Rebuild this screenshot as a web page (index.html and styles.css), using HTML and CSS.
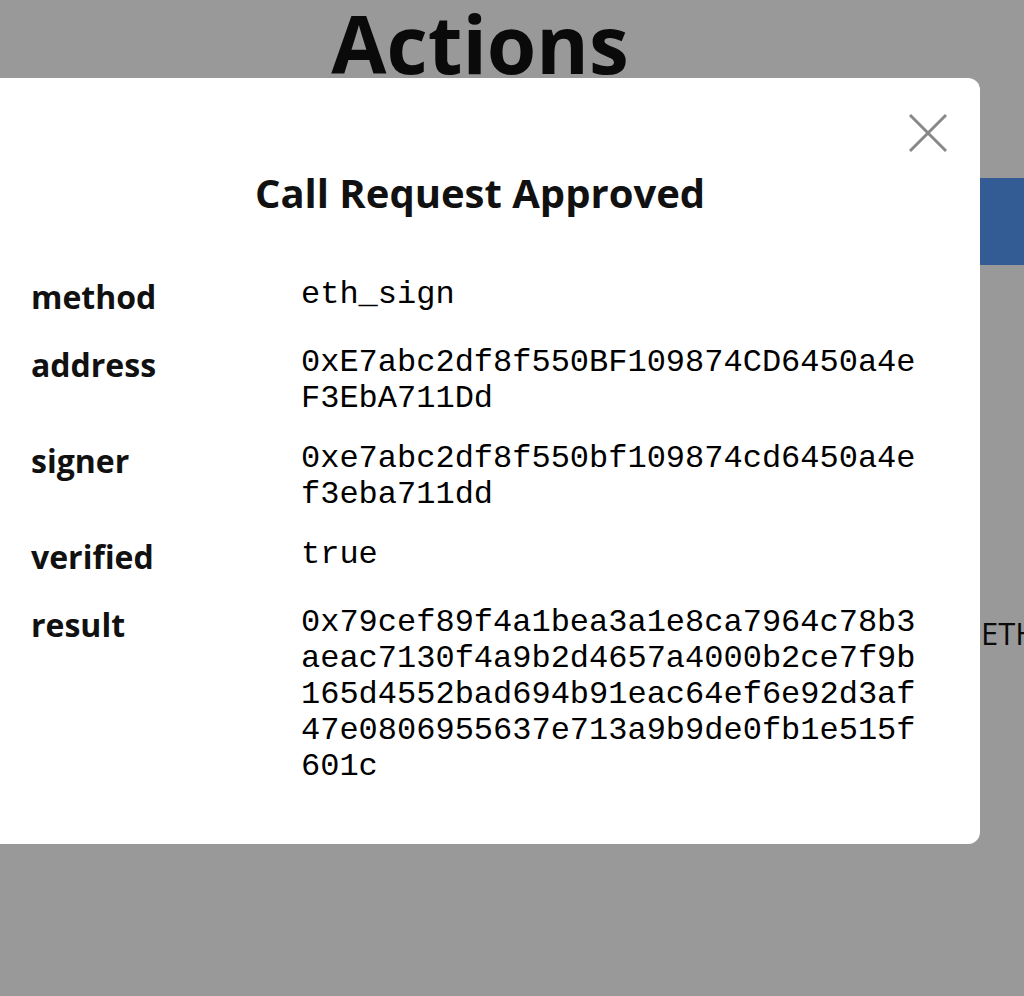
FILE: index.html
```html
<!DOCTYPE html>
<html lang="en">
<head>
<meta charset="utf-8">
<title>Call Request Approved</title>
<link rel="stylesheet" href="styles.css">
</head>
<body>
<main class="page">
  <h1 class="page-title">Actions</h1>
  <div class="action-bar"></div>
  <div class="balance">ETH</div>
</main>
<div class="overlay"></div>
<section class="modal">
  <button class="close" aria-label="Close">
    <svg width="40" height="40" viewBox="0 0 40 40"><path d="M2 2 L38 38 M38 2 L2 38" stroke="#888" stroke-width="3" fill="none"/></svg>
  </button>
  <h2 class="modal-title">Call Request Approved</h2>
  <div class="rows">
    <div class="row"><div class="label">method</div><div class="value">eth_sign</div></div>
    <div class="row"><div class="label">address</div><div class="value">0xE7abc2df8f550BF109874CD6450a4eF3EbA711Dd</div></div>
    <div class="row"><div class="label">signer</div><div class="value">0xe7abc2df8f550bf109874cd6450a4ef3eba711dd</div></div>
    <div class="row"><div class="label">verified</div><div class="value">true</div></div>
    <div class="row"><div class="label">result</div><div class="value">0x79cef89f4a1bea3a1e8ca7964c78b3aeac7130f4a9b2d4657a4000b2ce7f9b165d4552bad694b91eac64ef6e92d3af47e0806955637e713a9b9de0fb1e515f601c</div></div>
  </div>
</section>
</body>
</html>
```

FILE: styles.css
```css
html, body {
  margin: 0;
  padding: 0;
}
body {
  background: #fff;
  font-family: "Open Sans", "Liberation Sans", sans-serif;
  color: #111;
  overflow: hidden;
  width: 1024px;
  height: 996px;
}
.page {
  width: 960px;
}
.page-title {
  margin: 3px 0 0 0;
  font-size: 80px;
  line-height: 80px;
  font-weight: 700;
  text-align: center;
}
.action-bar {
  margin-top: 95px;
  height: 87px;
  margin-right: -64px;
  background: #5599f7;
}
.balance {
  margin-top: 347px;
  margin-left: 981px;
  font-size: 31px;
  white-space: nowrap;
}
.overlay {
  position: fixed;
  inset: 0;
  background: rgba(0, 0, 0, 0.4);
}
.modal {
  position: fixed;
  top: 78px;
  left: -20px;
  width: 1000px;
  box-sizing: border-box;
  padding: 90px 51px 41px 51px;
  background: #fff;
  border-radius: 12px;
}
.close {
  position: absolute;
  top: 35px;
  right: 32px;
  width: 40px;
  height: 40px;
  padding: 0;
  border: 0;
  background: none;
  display: flex;
}
.modal-title {
  margin: 0 0 54px 0;
  font-size: 40px;
  font-weight: 700;
  line-height: 49px;
  text-align: center;
  color: #111;
}
.rows {
  display: flex;
  flex-direction: column;
}
.row {
  display: grid;
  grid-template-columns: 270px 1fr;
  align-items: start;
  margin-bottom: 18px;
}
.label {
  padding-top: 1px;
  font-size: 32px;
  font-weight: 700;
  line-height: 49px;
  color: #111;
}
.value {
  padding-top: 6px;
  font-family: "Liberation Mono", "Courier New", monospace;
  font-size: 32px;
  line-height: 36px;
  color: #000;
  word-break: break-all;
}
```
